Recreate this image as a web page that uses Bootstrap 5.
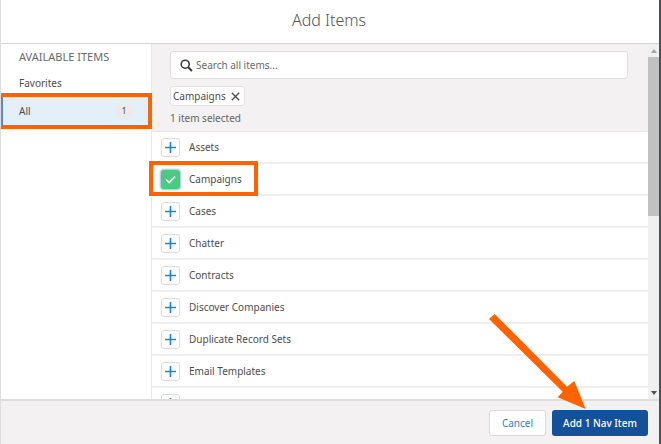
<!DOCTYPE html>
<html lang="en">
<head>
<meta charset="utf-8">
<meta name="viewport" content="width=device-width, initial-scale=1">
<title>Add Items</title>
<link href="https://cdn.jsdelivr.net/npm/bootstrap@5.3.0/dist/css/bootstrap.min.css" rel="stylesheet">
<style>
body { font-family: "Noto Sans", "Open Sans", sans-serif; font-size: 10px; line-height: 16px; color: #4e4d4c; background: #4b4f57; }
.picker { border-left: 1px solid #dcdde0; margin-right: 2px; background: #fff; }
.picker-head { height: 44px; padding: 10px 2px 0 0; border-bottom: 1px solid #d4d4d3; }
.picker-head h1 { font-size: 16px; line-height: 20px; font-weight: 300; color: #555; }
.picker-body { min-height: 0; }
.side { width: 151px; border-right: 1px solid #e8e6e7; }
.side h2 { font-size: 11px; line-height: 16px; font-weight: 400; color: #6b6a69; padding: 5px 0 5px 18px; }
.side a { color: #4e4d4c; padding-left: 18px; height: 26px; }
.side a.chosen { height: 30px; background: #e3eff9; border-left: 2px solid #5b86cf; padding-left: 16px; padding-right: 18px; }
.count { width: 18px; height: 16px; border-radius: 8px; background: #ecebea; font-size: 9px; }
.callout { position: absolute; border: 4px solid #ff6200; pointer-events: none; z-index: 3; }
.callout-side { inset: -3px -1px -3px -3px; }
.callout-row { inset: -3px auto -2px -3px; width: 109px; }
.filter { background: #f3f1f2; height: 88px; padding: 7px 20px 0 18px; border-bottom: 1px solid #e6e4e5; }
.search { height: 28px; background: #fff; border: 1px solid #dfdddd; border-radius: 3px; padding: 0 9px; gap: 3px; }
.search input { font-size: 10px; line-height: 16px; color: #555; outline: 0; min-width: 0; }
.search input::placeholder { color: #6a6968; opacity: 1; }
.pill { height: 20px; background: #fff; border: 1px solid #e3e1e1; border-radius: 3px; padding: 0 4px 0 2px; margin-top: 7px; gap: 5px; }
.status { margin-top: 4px; color: #656463; }
.item { height: 32px; flex: none; padding-left: 9px; gap: 9px; border-bottom: 2px solid #efedee; position: relative; }
.toggle { width: 19px; height: 19px; border: 1px solid #dddbda; border-radius: 3px; background: #fff; }
.toggle.on { background: #4bca81; border-color: #4bca81; box-shadow: 0 0 2px 1px #9dbfe0; }
.track { width: 11px; background: #f1f0f0; padding: 5px 0 4px; }
.thumb { background: #c1c1c1; flex: 0 0 46%; margin-top: 4px; }
.picker-foot { height: 45px; background: #f3f1f2; border-top: 2px solid #dfdddd; padding: 0 11px 0 0; gap: 6px; z-index: 4; }
.action { height: 26px; font-size: 10px; line-height: 16px; border-radius: 3px; padding: 0; }
.cancel { width: 57px; background: #fff; border: 1px solid #dddbda; color: #2b80ca; }
.cancel:hover { background: #f7f7f7; color: #2b80ca; }
.add, .add:hover { width: 96px; background: #15509a; color: #fff; font-weight: 500; }
.pointer { position: absolute; right: 62px; bottom: 27px; pointer-events: none; }
</style>
<script src="https://cdn.jsdelivr.net/npm/bootstrap@5.3.0/dist/js/bootstrap.bundle.min.js"></script>
</head>
<body>
<div class="picker vh-100 d-flex flex-column overflow-hidden" role="dialog" aria-labelledby="title">
  <header class="picker-head flex-shrink-0 text-center"><h1 id="title" class="m-0">Add Items</h1></header>
  <div class="picker-body flex-grow-1 d-flex overflow-hidden">
    <nav class="side flex-shrink-0 d-flex flex-column">
      <h2 class="m-0">AVAILABLE ITEMS</h2>
      <a href="#" class="d-flex align-items-center text-decoration-none">Favorites</a>
      <div class="position-relative">
        <a href="#" class="chosen d-flex align-items-center justify-content-between text-decoration-none">All <span class="count d-flex align-items-center justify-content-center">1</span></a>
        <div class="callout callout-side"></div>
      </div>
    </nav>
    <main class="flex-grow-1 d-flex flex-column">
      <div class="filter flex-shrink-0">
        <div class="search d-flex align-items-center">
          <svg width="13" height="13" viewBox="0 0 13 13" fill="none" stroke="#3b3a39" aria-hidden="true"><circle cx="5.2" cy="5.2" r="4" stroke-width="1.6"/><path d="M8.2 8.2 12 12" stroke-width="2"/></svg>
          <input type="search" class="border-0 bg-transparent p-0 flex-grow-1" placeholder="Search all items..." aria-label="Search all items">
        </div>
        <div class="d-flex"><div class="pill d-flex align-items-center">Campaigns
          <button type="button" class="btn p-0 border-0 d-flex" aria-label="Remove Campaigns"><svg width="9" height="9" viewBox="0 0 9 9" fill="none" stroke="#4e4d4c" stroke-width="1.3"><path d="M.8.8 8.2 8.2M8.2.8.8 8.2"/></svg></button></div></div>
        <div class="status">1 item selected</div>
      </div>
      <div id="items" class="d-flex flex-column"></div>
    </main>
    <div class="track flex-shrink-0 d-flex flex-column align-items-center" aria-hidden="true">
      <svg class="flex-shrink-0" width="6" height="4" viewBox="0 0 6 4"><path d="M0 4 3 0l3 4z" fill="#a3a3a3"/></svg>
      <div class="thumb w-100"></div>
      <svg class="flex-shrink-0 mt-auto" width="6" height="4" viewBox="0 0 6 4"><path d="M0 0h6L3 4z" fill="#505050"/></svg>
    </div>
  </div>
  <footer class="picker-foot flex-shrink-0 d-flex align-items-center justify-content-end position-relative">
    <button type="button" class="btn action cancel">Cancel</button>
    <div class="position-relative d-flex">
      <button type="button" class="btn action add border-0">Add 1 Nav Item</button>
      <svg class="pointer" width="97" height="95" viewBox="0 0 97 95" aria-hidden="true"><path d="M0 5 5.7 0 78 72.7 85.3 67 96.7 95 68.7 83.3 73.7 77.7z" fill="#ff6200"/></svg>
    </div>
  </footer>
</div>
<script>
const names = ["Assets", "Campaigns", "Cases", "Chatter", "Contracts", "Discover Companies", "Duplicate Record Sets", "Email Templates", ""];
const plus = '<svg width="11" height="11" viewBox="0 0 11 11" fill="none" stroke="#1f82d2" stroke-width="1.6"><path d="M5.5 0v11M0 5.5h11"/></svg>';
const check = '<svg width="11" height="11" viewBox="0 0 11 11" fill="none" stroke="#fff" stroke-width="1.6"><path d="M1 5.5 4.2 8.6 10 2.5"/></svg>';
document.getElementById("items").innerHTML = names.map(name => {
  const on = name === "Campaigns";
  return `<div class="item d-flex align-items-center">
    <button type="button" class="btn toggle p-0 d-flex align-items-center justify-content-center${on ? " on" : ""}" aria-label="Toggle ${name}" aria-pressed="${on}">${on ? check : plus}</button>
    <span>${name}</span>${on ? '<div class="callout callout-row"></div>' : ""}</div>`;
}).join("");
</script>
</body>
</html>
